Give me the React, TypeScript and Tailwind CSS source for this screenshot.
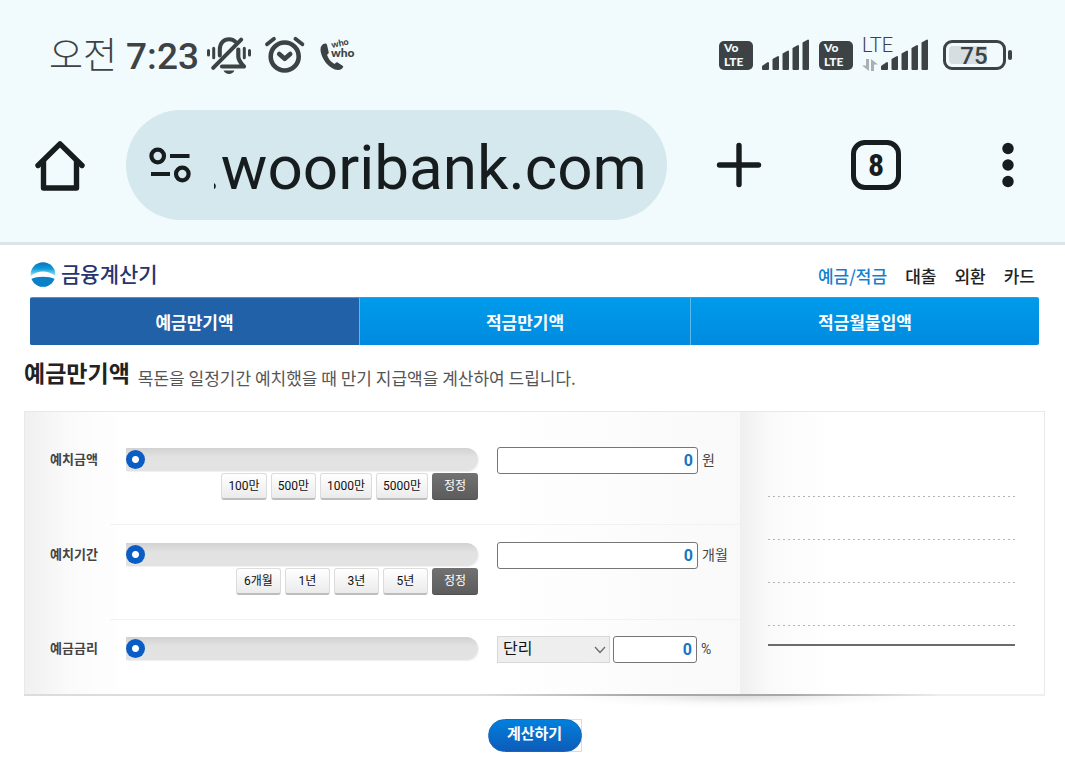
import { useState } from "react";
import type { ReactNode } from "react";

const CATEGORIES = ["예금/적금", "대출", "외환", "카드"];

function BellOffIcon() {
  return (
    <svg width="44" height="38" viewBox="0 0 44 38" fill="none" stroke="#3d4344" strokeLinecap="round">
      <path d="M1.500 14.500V19M6.700 12.200v9.600M37.300 12.200v9.600M42.500 14.500V19" strokeWidth="3" />
      <path d="M12.800 19.500V13.500C12.800 7 17 3.200 22 3.200c2.700 0 5 1 6.700 2.800" strokeWidth="4" />
      <path d="M34.200 3.600 6.200 31.800" strokeWidth="4" />
      <path d="M31.300 13.500v7c0 3 2.600 6.800 5.700 10H15" strokeWidth="4.200" strokeLinejoin="round" />
      <path d="M16.500 34.600h11c-1 2.300-3.200 3.400-5.500 3.400s-4.500-1.100-5.500-3.400z" fill="#3d4344" stroke="none" />
    </svg>
  );
}

function AlarmIcon() {
  return (
    <svg width="42" height="38" viewBox="0 0 42 38" fill="none" stroke="#3d4344" strokeWidth="4.600" strokeLinecap="round">
      <circle cx="20.700" cy="20.500" r="14" />
      <path d="m15.200 18 5.500 4.800 5.500-4.800" strokeLinejoin="round" />
      <path d="M3 8.300 10 2.800M31.400 2.800l7 5.500" strokeWidth="3.800" />
    </svg>
  );
}

function WhoCallIcon() {
  return (
    <svg width="40" height="38" viewBox="0 -2 40 38" fill="#3d4344" className="overflow-visible">
      <path d="M5.800 5.500C3 6 1.300 8.500 1.500 12c.7 9.500 9.500 19.500 17.500 20 2.800 0 5-1.500 5.300-3.700L19 24.700c-1.200-.7-2.200-.3-3.400 1.200C12 24 9.200 20.700 8 16.700c1.500-.8 2-1.600 1.600-2.900L8 6.700c-.4-1-1.100-1.400-2.200-1.200z" />
      <g fontFamily="Lato, Roboto, sans-serif" fontWeight="900">
        <text x="13" y="10" fontSize="9" transform="rotate(-12 13 10)">who</text>
        <text x="12" y="19" fontSize="12">who</text>
      </g>
    </svg>
  );
}

function VolteBadge() {
  return (
    <span className="flex h-[29px] w-[34px] flex-col items-center rounded-[5px] bg-[#3d4344] font-['Lato','Roboto',sans-serif] text-[12px] leading-[14px] font-black text-[#f1fafd]">
      <span className="w-6">Vo</span>
      <span className="w-6">LTE</span>
    </span>
  );
}

function SignalBars() {
  return (
    <svg width="48" height="32" viewBox="0 0 48 32" fill="#3d4344" stroke="#3d4344" strokeWidth="2" strokeLinejoin="round">
      <path d="M1 30v-2.500L6 24v6z" />
      <path d="M11.500 30V20.500l4.500-2.500v12z" />
      <path d="M21.500 30V15l4.500-2.500V30z" />
      <path d="M31.500 30V9.500L36 7v23z" />
      <path d="M41.500 30V4L46 1.500v28.500z" />
    </svg>
  );
}

function DataArrows() {
  return (
    <svg width="16" height="12" viewBox="0 0 16 12" fill="#a9b0b2">
      <path d="M4 0h3v12L0 6.500h4zM12 12H9V0l7 5.500h-4z" />
    </svg>
  );
}

function HomeIcon() {
  return (
    <svg width="52" height="52" viewBox="0 0 52 52" fill="none" stroke="#171d1e" strokeWidth="5.400" strokeLinecap="round" strokeLinejoin="round">
      <path d="M4 26.500 26 4.800l22 21.700" />
      <path d="M9.500 23v26h33V23" />
    </svg>
  );
}

function SiteSettingsIcon() {
  return (
    <svg width="44" height="38" viewBox="0 0 44 38" fill="none" stroke="#171d1e" strokeWidth="4.200">
      <circle cx="9.700" cy="10" r="6.300" />
      <path d="M22 10h19.500M3 28h19" />
      <circle cx="34.300" cy="28" r="6.300" />
    </svg>
  );
}

function StatusBar() {
  return (
    <div className="flex h-[110px] items-center justify-between pr-[53px] pl-[49px] text-[#3d4344]">
      <div className="flex items-center gap-2">
        <p className="flex items-baseline gap-[9px] text-[37px] leading-[44px]">
          <span className="font-['Noto_Sans_CJK_KR',sans-serif] font-light">오전</span>
          <span className="font-medium">7:23</span>
        </p>
        <div className="flex items-center gap-[13px]">
          <BellOffIcon />
          <AlarmIcon />
          <WhoCallIcon />
        </div>
      </div>
      <div className="flex items-center gap-[9px]">
        <VolteBadge />
        <SignalBars />
        <VolteBadge />
        <div className="relative flex items-end gap-[3px]">
          <span className="absolute bottom-[17px] left-0 text-[20px] leading-[18px] font-light">LTE</span>
          <DataArrows />
          <SignalBars />
        </div>
        <div className="flex items-center gap-[2px] pl-[5px]">
          <span className="flex h-[30px] w-[63px] items-center rounded-[9px] border-3 border-[#3d4344] pl-[3px]">
            <span className="flex h-[18px] w-[38px] items-center justify-center rounded-l-[4px] bg-[#d5dee1] pt-[2px] pl-[12px] text-[24px] leading-none font-medium">75</span>
          </span>
          <span className="h-[10px] w-[4px] rounded-[2px] bg-[#3d4344]" />
        </div>
      </div>
    </div>
  );
}

function BrowserBar() {
  return (
    <div className="flex items-center pr-[46px] pb-[22px] pl-[34px] text-[#171d1e]">
      <button type="button" aria-label="홈">
        <HomeIcon />
      </button>
      <div className="ml-10 flex h-[110px] min-w-0 flex-1 items-center rounded-full bg-[#d4e8ed] pr-[19px] pl-[22px]">
        <button type="button" aria-label="사이트 정보" className="shrink-0">
          <SiteSettingsIcon />
        </button>
        <div className="ml-[22px] flex min-w-0 flex-1 justify-end overflow-hidden pt-[6px]">
          <input
            type="text"
            aria-label="주소"
            defaultValue=".wooribank.com"
            className="w-[460px] shrink-0 bg-transparent pr-px text-right text-[62px] leading-[76px] outline-none"
          />
        </div>
      </div>
      <button type="button" aria-label="새 탭" className="ml-[49px]">
        <svg width="46" height="46" viewBox="0 0 46 46" stroke="#171d1e" strokeWidth="5.400" strokeLinecap="round">
          <path d="M23 3.500v39M3.500 23h39" />
        </svg>
      </button>
      <button
        type="button"
        aria-label="탭 8개"
        className="ml-[89px] flex h-[50px] w-[50px] items-center justify-center rounded-[14px] border-[5px] border-[#171d1e] font-['Roboto_Condensed','Open_Sans_Condensed','Roboto',sans-serif] text-[32px] leading-none font-bold"
      >
        8
      </button>
      <button type="button" aria-label="메뉴" className="ml-[96px]">
        <svg width="22" height="46" viewBox="0 0 22 46" fill="#171d1e">
          <circle cx="11" cy="6.500" r="5.700" />
          <circle cx="11" cy="23" r="5.700" />
          <circle cx="11" cy="39.500" r="5.700" />
        </svg>
      </button>
    </div>
  );
}

function WooriLogo() {
  return (
    <svg width="26" height="26" viewBox="0 0 26 26">
      <defs>
        <linearGradient id="sky" x1="0" y1="0" x2="0" y2="1">
          <stop offset="0" stopColor="#0a6fb8" />
          <stop offset="0.250" stopColor="#0d9ad8" />
          <stop offset="0.500" stopColor="#8fdcf5" />
        </linearGradient>
        <clipPath id="globe">
          <circle cx="13" cy="12.500" r="12.300" />
        </clipPath>
      </defs>
      <g clipPath="url(#globe)">
        <rect width="26" height="26" fill="url(#sky)" />
        <path d="M0 14.500C4 11 8.500 9.500 13 9.500s9 1.500 13 5v3H0z" fill="#fff" />
        <path d="M0 17.500C4 15.500 8.500 14.800 13 14.800s9 .7 13 2.700V26H0z" fill="#0b80c6" />
      </g>
    </svg>
  );
}

function Tabs() {
  const tab = "flex h-[47px] items-center justify-center pt-1 text-[17px] font-bold text-white";
  return (
    <nav className="mr-[26px] ml-[30px] flex overflow-hidden rounded-[2px] border-t border-[#2f9fe0] bg-linear-to-b from-[#009bea] to-[#008be0]">
      <a href="#deposit" aria-current="page" className={`${tab} flex-[329] border-r border-[#5db8ec] bg-[#2161a8]`}>
        예금만기액
      </a>
      <a href="#savings" className={`${tab} flex-[330] border-r border-[#5db8ec]`}>
        적금만기액
      </a>
      <a href="#monthly" className={`${tab} flex-[348]`}>
        적금월불입액
      </a>
    </nav>
  );
}

interface FieldRowProps {
  id: string;
  label: string;
  max: number;
  value: number;
  onChange: (value: number) => void;
  first?: boolean;
  last?: boolean;
  presets?: { label: string; amount: number }[];
  children: ReactNode;
}

function FieldRow({ id, label, max, value, onChange, first, last, presets, children }: FieldRowProps) {
  const top = first ? "pt-[35px]" : last ? "pt-4" : "pt-[17px]";
  return (
    <div className="flex">
      <label htmlFor={id} className={`w-[85px] shrink-0 pl-[25px] text-[13px] leading-[25px] font-bold text-[#444] ${top}`}>
        {label}
      </label>
      <div className={`flex min-w-0 flex-1 items-start pl-4 ${top} ${last ? "pb-[31px]" : "border-b border-[#f2f2f2] pb-6"}`}>
        <div className="flex min-w-0 flex-1 flex-col gap-[2px] pt-px">
          <input
            type="range"
            aria-label={label}
            min={0}
            max={max}
            value={value}
            onChange={(e) => onChange(Number(e.target.value))}
            className="block h-[23px] w-full appearance-none rounded-r-full bg-linear-to-b from-[#d2d2d2] via-[#e2e2e2] via-40% to-[#e3e3e3] shadow-[1px_1px_1px_#f0f0f0] [&::-webkit-slider-thumb]:h-[19px] [&::-webkit-slider-thumb]:w-[19px] [&::-webkit-slider-thumb]:appearance-none [&::-webkit-slider-thumb]:rounded-full [&::-webkit-slider-thumb]:bg-[radial-gradient(circle,#fff_3px,#0a5dc4_4px)]"
          />
          {presets && (
            <div className="flex justify-end gap-1">
              {presets.map((preset) => (
                <button
                  key={preset.label}
                  type="button"
                  onClick={() => onChange(Math.min(max, value + preset.amount))}
                  className="h-[27px] min-w-[45px] rounded-[3px] border border-b-2 border-[#dcdcdc] border-b-[#bdbdbd] bg-linear-to-b from-white to-[#ebebeb] px-[6px] text-[12px] leading-none text-[#111]"
                >
                  {preset.label}
                </button>
              ))}
              <button
                type="button"
                onClick={() => onChange(0)}
                className="h-[27px] min-w-[46px] rounded-[3px] border-b border-[#505050] bg-linear-to-b from-[#727272] to-[#5c5c5c] text-[12px] leading-none text-white"
              >
                정정
              </button>
            </div>
          )}
        </div>
        <div className="ml-[19px] flex w-[243px] shrink-0 items-center">{children}</div>
      </div>
    </div>
  );
}

const inputClass =
  "h-[27px] rounded-[3px] border border-[#767676] bg-white pr-1 text-right text-[16px] font-bold text-[#1577c2] outline-none";
const unitClass = "ml-1 pb-[2px] text-[14px] leading-none text-[#444]";

function ResultPanel() {
  return (
    <div className="w-[304px] shrink-0 bg-linear-to-r from-[#efefef] via-[#fafafa] via-10% to-white to-30% pt-[84px] pr-[29px] pl-7">
      {[0, 1, 2, 3].map((line) => (
        <div key={line} className={line < 3 ? "h-[43px]" : "h-[19px]"}>
          <div className="h-px bg-[repeating-linear-gradient(to_right,#b4b4b4_0_2px,transparent_2px_5px)]" />
        </div>
      ))}
      <div className="h-[2px] bg-[#6b6b6b]" />
    </div>
  );
}

function Calculator() {
  const [amount, setAmount] = useState(0);
  const [months, setMonths] = useState(0);
  const [rate, setRate] = useState(0);
  const [method, setMethod] = useState("simple");

  return (
    <form onSubmit={(e) => e.preventDefault()}>
      <div className="mr-5 ml-6">
        <div className="flex border border-b-0 border-[#e9e9e9]">
          <div className="min-w-0 flex-1 bg-[linear-gradient(to_right,#f0f0f0,#fafafa_6%,#fff_14%,#fff_65%,#f9f9f9)]">
            <FieldRow
              id="amount"
              label="예치금액"
              max={100000000}
              value={amount}
              onChange={setAmount}
              first
              presets={[
                { label: "100만", amount: 1000000 },
                { label: "500만", amount: 5000000 },
                { label: "1000만", amount: 10000000 },
                { label: "5000만", amount: 50000000 },
              ]}
            >
              <input id="amount" value={amount} onChange={(e) => setAmount(Number(e.target.value) || 0)} className={`${inputClass} w-[201px]`} />
              <span className={unitClass}>원</span>
            </FieldRow>
            <FieldRow
              id="months"
              label="예치기간"
              max={60}
              value={months}
              onChange={setMonths}
              presets={[
                { label: "6개월", amount: 6 },
                { label: "1년", amount: 12 },
                { label: "3년", amount: 36 },
                { label: "5년", amount: 60 },
              ]}
            >
              <input id="months" value={months} onChange={(e) => setMonths(Number(e.target.value) || 0)} className={`${inputClass} w-[201px]`} />
              <span className={unitClass}>개월</span>
            </FieldRow>
            <FieldRow id="rate" label="예금금리" max={20} value={rate} onChange={setRate} last>
              <div className="relative mr-[3px]">
                <select
                  aria-label="이자 계산 방식"
                  value={method}
                  onChange={(e) => setMethod(e.target.value)}
                  className="block h-[27px] w-[113px] appearance-none border border-[#d8d8d8] bg-[#eee] pb-[2px] pl-[5px] text-[16px] leading-none text-[#111]"
                >
                  <option value="simple">단리</option>
                  <option value="compound">복리</option>
                </select>
                <svg className="pointer-events-none absolute top-[10px] right-1" width="12" height="8" viewBox="0 0 12 8" fill="none" stroke="#666" strokeWidth="1.200">
                  <path d="m1 1 5 5.500L11 1" />
                </svg>
              </div>
              <input id="rate" value={rate} onChange={(e) => setRate(Number(e.target.value) || 0)} className={`${inputClass} w-[84px]`} />
              <span className={unitClass}>%</span>
            </FieldRow>
          </div>
          <ResultPanel />
        </div>
        <div className="h-[2px] bg-[linear-gradient(to_right,#dcdcdc,#dcdcdc_45%,#a8a8a8_60%,#a8a8a8_75%,#efefef_90%)]" />
        <div className="h-[23px] bg-[radial-gradient(ellipse_17%_12px_at_70%_0,#dcdcdc,#f8f8f8_60%,transparent)]" />
      </div>
      <div className="flex justify-center pl-1">
        <div className="relative">
          <span className="absolute inset-y-0 right-0 w-5 border border-l-0 border-[#cfdfec]" />
          <button
            type="submit"
            className="relative h-[33px] w-[94px] rounded-full border border-[#1769b8] bg-linear-to-b from-[#0080dd] to-[#0e5bb8] pb-[2px] text-[15px] leading-none font-bold text-white"
          >
            계산하기
          </button>
        </div>
      </div>
    </form>
  );
}

export default function App() {
  return (
    <div className="min-h-screen bg-white font-['Roboto','Noto_Sans_CJK_KR',sans-serif]">
      <header className="border-b-3 border-[#dbe4e7] bg-[#f1fafd]">
        <StatusBar />
        <BrowserBar />
      </header>
      <main>
        <div className="flex h-[52px] items-center justify-between pt-2 pr-[30px] pl-[30px] font-['Noto_Sans_CJK_KR',sans-serif]">
          <h1 className="flex items-center gap-[5px] text-[21px] leading-none font-medium text-[#26356f]">
            <WooriLogo />
            <span className="pb-[3px]">금융계산기</span>
          </h1>
          <nav className="flex gap-[18px] pt-px text-[17px] leading-none font-medium text-[#222]">
            {CATEGORIES.map((name, i) => (
              <a key={name} href="#category" className={i === 0 ? "text-[#1180d0]" : ""}>
                {name}
              </a>
            ))}
          </nav>
        </div>
        <Tabs />
        <div className="flex h-[66px] items-end gap-2 pb-[21px] pl-6 font-['Noto_Sans_CJK_KR',sans-serif]">
          <h2 className="text-[23px] leading-9 font-bold text-[#222]">예금만기액</h2>
          <p className="text-[17px] leading-6 text-[#555]">목돈을 일정기간 예치했을 때 만기 지급액을 계산하여 드립니다.</p>
        </div>
        <Calculator />
      </main>
    </div>
  );
}
